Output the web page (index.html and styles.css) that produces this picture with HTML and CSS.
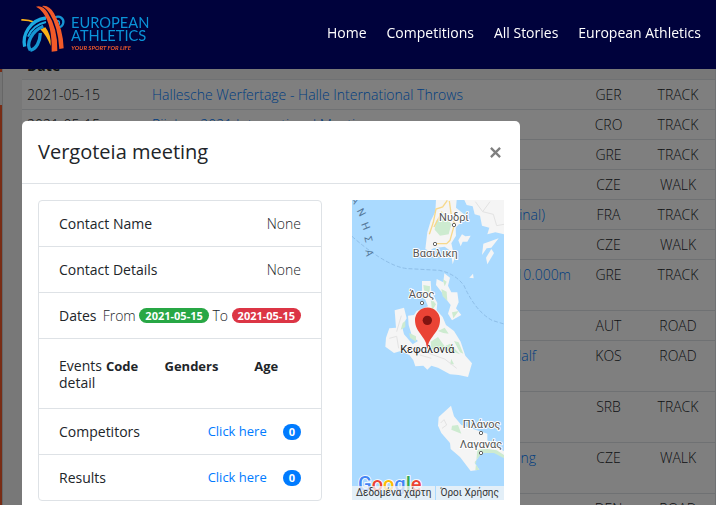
FILE: index.html
```html
<!DOCTYPE html>
<html lang="en">
<head>
<meta charset="utf-8">
<title>European Athletics - Competitions</title>
<link rel="stylesheet" href="styles.css">
</head>
<body>
<header class="navbar">
  <a class="brand" href="#" aria-label="European Athletics">
    <svg class="logo" viewBox="63 12 387 153">
      <g fill="none">
        <path d="M64 57Q86 56 106 65L102 69Q84 61 64 62Z" fill="#fbb017"/>
        <path d="M121 88L136 82Q154 104 152 138Q140 107 121 88Z" fill="#fbb017"/>
        <path d="M74 140C66 104 90 60 138 54" stroke="#1ba9e1" stroke-width="10"/>
        <path d="M84 110C94 86 112 72 138 66" stroke="#1ba9e1" stroke-width="6"/>
        <path d="M91 151C78 133 92 95 130 79M91 151C109 147 120 126 121 99" stroke="#1695d3" stroke-width="10"/>
        <path d="M165 52C180 46 192 56 190 68C189 77 182 82 175 81" stroke="#1695d3" stroke-width="7"/>
        <path d="M168 63C178 60 182 68 175 76" stroke="#1ba9e1" stroke-width="4"/>
        <path d="M108 20Q127 14 143 38Q174 86 172 153L155 155Q157 76 129 38Q120 25 108 20Z" fill="#f15a29"/>
        <path d="M126 18Q147 14 162 40Q189 86 191 145L178 147Q174 80 150 42Q140 25 126 18Z" fill="#f15a29"/>
      </g>
      <text class="logo-name" x="213" y="84">EUROPEAN</text>
      <text class="logo-name" x="213" y="123">ATHLETICS</text>
      <text class="logo-tag" x="214" y="149">YOUR SPORT FOR LIFE</text>
    </svg>
  </a>
  <nav class="nav">
    <a href="#">Home</a>
    <a href="#">Competitions</a>
    <a href="#">All Stories</a>
    <a href="#">European Athletics</a>
  </nav>
</header>

<main class="page">
  <table class="events">
    <colgroup><col class="col-date"><col><col class="col-country"><col class="col-type"></colgroup>
    <thead><tr><th>Date</th><th></th><th></th><th></th></tr></thead>
    <tbody>
      <tr><td>2021-05-15</td><td><a href="#">Hallesche Werfertage - Halle International Throws</a></td><td>GER</td><td>TRACK</td></tr>
      <tr><td>2021-05-15</td><td><a href="#">Rijeka - 2021 International Meeting</a></td><td>CRO</td><td>TRACK</td></tr>
      <tr><td></td><td></td><td>GRE</td><td>TRACK</td></tr>
      <tr><td></td><td></td><td>CZE</td><td>WALK</td></tr>
      <tr><td></td><td><a class="tail tail-final" href="#">(Final)</a></td><td>FRA</td><td>TRACK</td></tr>
      <tr><td></td><td></td><td>CZE</td><td>WALK</td></tr>
      <tr class="tall"><td></td><td><a class="tail" href="#">10.000m</a></td><td>GRE</td><td>TRACK</td></tr>
      <tr><td></td><td></td><td>AUT</td><td>ROAD</td></tr>
      <tr class="tall"><td></td><td><a class="tail tail-half" href="#">Half</a></td><td>KOS</td><td>ROAD</td></tr>
      <tr class="tall"><td></td><td></td><td>SRB</td><td>TRACK</td></tr>
      <tr class="tall"><td></td><td><a class="tail tail-half" href="#">Walking</a></td><td>CZE</td><td>WALK</td></tr>
      <tr><td></td><td></td><td>DEN</td><td>ROAD</td></tr>
    </tbody>
  </table>
</main>

<div class="backdrop">
  <section class="modal" role="dialog" aria-labelledby="modal-title">
    <div class="modal-header">
      <h5 id="modal-title">Vergoteia meeting</h5>
      <button class="close" type="button" aria-label="Close">
        <svg viewBox="0 0 12 12"><path d="M1 1L11 11M11 1L1 11"/></svg>
      </button>
    </div>
    <div class="modal-body">
      <ul class="details">
        <li><span class="label">Contact Name</span><span>None</span></li>
        <li><span class="label">Contact Details</span><span>None</span></li>
        <li><span class="label">Dates</span><span>From <b class="badge green">2021-05-15</b> To <b class="badge red">2021-05-15</b></span></li>
        <li class="events-detail"><span class="label">Events detail</span>
          <table class="codes"><tr><th>Code</th><th>Genders</th><th>Age</th></tr></table>
        </li>
        <li><span class="label">Competitors</span><span class="more"><a href="#">Click here</a><b class="badge blue">0</b></span></li>
        <li><span class="label">Results</span><span class="more"><a href="#">Click here</a><b class="badge blue">0</b></span></li>
      </ul>
      <div class="map">
        <svg viewBox="6 15 456 900" preserveAspectRatio="xMidYMid slice">
          <rect x="6" y="15" width="456" height="900" fill="#aadaff"/>
          <g fill="#f5f5f5">
            <path d="M258 15H320L318 38L348 62L330 84L317 98L318 122L304 145L314 190L308 208L302 168L284 155L250 160L238 168L226 162L232 112L242 78L256 50Z"/>
            <path d="M343 15H462V118L436 112L412 118L418 98L396 92L390 62L374 58L368 34L350 30Z"/>
            <path d="M325 136L336 118L346 124L362 122L352 140L338 140L332 154Z"/>
            <path d="M400 146L446 130L424 158L410 160L396 180Z"/>
            <path d="M424 162L432 174L412 208L408 188Z"/>
            <path d="M369 236L371 250L358 248Z"/>
            <path d="M283 235L300 248L294 272L304 292L322 292L326 322L318 340L334 360L306 376L294 356L302 330L286 310L274 290L258 270L260 252L280 262Z"/>
            <path d="M216 258H242L244 290L262 324L260 346L278 366L288 390L312 408L332 440L346 482L366 505L354 546L326 540L300 538L264 518L244 512L232 524L220 512L196 514L190 496L178 480L152 468L132 474L106 455L108 428L118 400L138 398L134 346L162 338L170 370L156 394L162 418L188 448L204 438L186 424L176 390L174 362L192 360L200 348L234 334L216 290Z"/>
            <path d="M303 632L312 664L334 690L376 704L412 716L412 736L436 756L462 768V784L430 770L396 768L374 804L388 824L362 828L330 786L302 762L300 744L274 714L264 692L266 666Z"/>
          </g>
          <g fill="#cdebd0">
            <path d="M258 78L282 54L304 88L296 118L270 122L254 104Z"/>
            <path d="M220 270L240 274L238 298L222 286ZM278 252L290 260L284 274ZM274 282L290 290L292 318L278 304ZM306 352L326 348L310 370Z"/>
            <path d="M242 308L258 328L246 348ZM158 384L166 378L166 396L152 404ZM178 414L198 424L198 440L180 428ZM264 408L284 398L296 416L280 414ZM242 440L264 426L284 454L300 446L330 478L304 468L244 462ZM312 438L326 442L340 476L330 472ZM304 492L312 508H300Z"/>
            <path d="M306 692L324 690L334 716L304 704ZM382 764L412 762L440 766L462 780V790L432 774L396 774L374 802L388 824L376 826Z"/>
          </g>
          <g fill="none" stroke="#e3e3e3" stroke-width="3">
            <path d="M376 20L398 50L430 58L440 92L462 88M398 50L420 20M118 430L140 424L146 460M140 410L154 362M222 470L284 492L320 520M210 480L244 490M272 684L282 674L290 690L276 700"/>
          </g>
          <path d="M292 16L278 36L258 42L250 82L238 118M298 18L304 62L314 86L300 136L290 146H254M276 50L252 96" fill="none" stroke="#f7d98c" stroke-width="4"/>
          <path d="M6 124Q44 158 84 184Q140 220 176 221L268 226Q316 236 342 272Q376 348 426 376L462 387" fill="none" stroke="#8ebee8" stroke-width="3" stroke-dasharray="12 6"/>
          <g fill="#fff" stroke="#666" stroke-width="3">
            <circle cx="312" cy="90" r="5"/><circle cx="255" cy="147" r="5"/><circle cx="216" cy="324" r="5"/><circle cx="393" cy="714" r="5"/><circle cx="393" cy="774" r="5"/>
          </g>
          <g class="sea">
            <text transform="translate(16 16) rotate(58)">Α</text>
            <text transform="translate(34 52) rotate(62)">Ν</text>
            <text transform="translate(47 93) rotate(68)">Η</text>
            <text transform="translate(55 133) rotate(76)">Σ</text>
            <text transform="translate(58 174) rotate(80)">Α</text>
          </g>
          <g class="places">
            <text x="312" y="78">Νυδρί</text>
            <text x="256" y="186">Βασιλικη</text>
            <text x="215" y="308">Άσος</text>
            <text x="395" y="698">Πλάνος</text>
            <text x="393" y="760">Λαγανάς</text>
          </g>
          <path d="M232 462C230 424 195 414 195 375A37 37 0 0 1 270 375C270 414 235 424 232 462Z" fill="#ea4335"/>
          <circle cx="232" cy="376" r="14" fill="#811411"/>
          <text class="island" x="232" y="475">Κεφαλονιά</text>
          <path d="M229 446H235L232 462Z" fill="#ea4335"/>
          <text class="google" x="24" y="889"><tspan fill="#4285f4">G</tspan><tspan fill="#ea4335">o</tspan><tspan fill="#fbbc05">o</tspan><tspan fill="#4285f4">g</tspan><tspan fill="#34a853">l</tspan><tspan fill="#ea4335">e</tspan></text>
        </svg>
        <div class="map-credits"><a href="#">Δεδομένα χάρτη</a><a href="#">Όροι Χρήσης</a></div>
      </div>
    </div>
  </section>
</div>
</body>
</html>
```
FILE: styles.css
```css
* { box-sizing: border-box; }

body {
  margin: 0;
  min-height: 100vh;
  overflow: hidden;
  padding-left: 2px;
  background: linear-gradient(#f0592a 0 72px, #e8e8e8 72px 105px, #f0592a 105px);
  color: #212529;
  font: 14px/21px "Open Sans", "Noto Sans", sans-serif;
}

a { color: #007bff; text-decoration: none; }

.navbar {
  position: fixed;
  inset: 0 0 auto 0;
  z-index: 3;
  display: flex;
  align-items: flex-start;
  justify-content: space-between;
  height: 69px;
  padding: 4px 15px 0 21px;
  background: #00023c;
}

.logo { display: block; width: 129px; height: 51px; }
.logo-name { fill: #0a94d8; font: 44px Lato, sans-serif; }
.logo-tag { fill: #f15a29; font: italic bold 18px Lato, sans-serif; }

.nav { display: flex; gap: 20px; padding-top: 18px; }
.nav a { color: #fff; font-weight: 500; }

.page {
  height: 100vh;
  overflow: hidden;
  padding: 49px 0 0 19px;
  border-left: 1px solid #ccc;
  background: #f0f0f0;
}

.events {
  width: 100%;
  table-layout: fixed;
  border-collapse: separate;
  border-spacing: 0;
  border-right: 1px solid #dee2e6;
}
.col-date { width: 125px; }
.col-country { width: 65px; }
.col-type { width: 74px; }
.events th, .events td {
  height: 30px;
  padding: 4px 5px;
  text-align: left;
  vertical-align: top;
  white-space: nowrap;
}
.events th { padding: 6px 5px 3px; }
.events td { border-top: 1px solid #dee2e6; background: #fff; font-weight: 300; }
.events td:nth-child(n+3) { padding: 4px 0; text-align: center; }
.events .tall td { height: 51px; }
.tail { display: block; text-align: right; }
.tail-final { padding-right: 26px; }
.tail-half { padding-right: 35px; }

.backdrop {
  position: fixed;
  inset: 0;
  z-index: 2;
  padding: 121px 22px 0;
  background: rgba(0, 0, 0, 0.5);
}

.modal {
  max-width: 498px;
  border-radius: 5px;
  background: #fff;
}

.modal-header {
  display: flex;
  align-items: center;
  justify-content: space-between;
  padding: 16px;
  border-bottom: 1px solid #dee2e6;
}
.modal-header h5 { margin: 0; font-size: 20px; line-height: 30px; font-weight: 500; }
.close { display: flex; padding: 3px; border: 0; background: none; }
.close svg { width: 11px; height: 11px; fill: none; stroke: #7f7f7f; stroke-width: 2.5; }

.modal-body { display: flex; gap: 30px; align-items: flex-start; padding: 16px; }

.details {
  flex: 1;
  margin: 0;
  padding: 0;
  border: 1px solid #dee2e6;
  border-radius: 4px;
  list-style: none;
}
.details li {
  display: flex;
  align-items: center;
  justify-content: space-between;
  padding: 12px 20px;
  font-weight: 300;
  white-space: nowrap;
}
.details li + li { border-top: 1px solid #dee2e6; }
.details .label { font-weight: 400; }
.more a { font-weight: 400; font-size: 13px; }

.badge {
  display: inline-block;
  padding: 2px 6px;
  border-radius: 10px;
  color: #fff;
  font-size: 11px;
  font-weight: 700;
  line-height: 11px;
  vertical-align: 1px;
}
.green { background: #28a745; }
.red { background: #dc3545; }
.blue { background: #007bff; }
.more { display: flex; align-items: center; gap: 16px; }
.more .badge { line-height: 12px; }

.details .events-detail { justify-content: flex-start; min-height: 70px; }
.events-detail .label { width: 47px; line-height: 17px; white-space: normal; }
.codes { flex: 1; align-self: flex-start; border-spacing: 0; font-size: 13px; }
.codes th { padding: 5px 0; text-align: left; }
.codes th:nth-child(1) { width: 30%; }
.codes th:nth-child(2) { width: 46%; }

.map { position: relative; flex: 0 0 152px; height: 300px; }
.map svg { display: block; width: 100%; height: 100%; }
.sea {
  fill: #55789a;
  font: 31px Roboto, sans-serif;
  text-anchor: middle;
  dominant-baseline: central;
}
.places, .island {
  fill: #555;
  font: 33px Roboto, sans-serif;
  text-anchor: middle;
  paint-order: stroke;
  stroke: #fff;
  stroke-width: 6px;
  stroke-linejoin: round;
}
.island { fill: #222; stroke-width: 3px; }
.google {
  font: 500 60px Roboto, sans-serif;
  paint-order: stroke;
  stroke: #fff;
  stroke-width: 5px;
}
.map-credits {
  position: absolute;
  inset: auto 0 0 0;
  display: flex;
  gap: 1px;
  font: 10px/14px Roboto, sans-serif;
  white-space: nowrap;
}
.map-credits a { padding: 0 4px; background: rgba(245, 245, 245, 0.75); color: #333; }
.map-credits a:last-child { flex: 1; }
```
